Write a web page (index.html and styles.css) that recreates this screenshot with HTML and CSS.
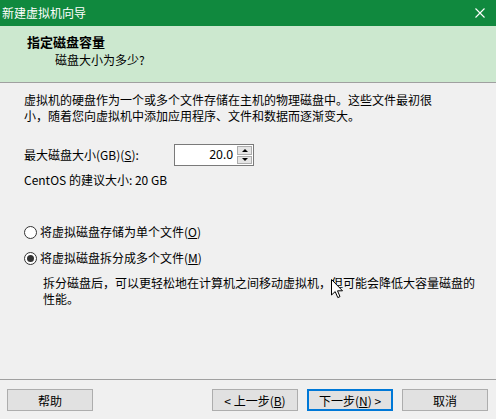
FILE: index.html
```html
<!DOCTYPE html>
<html>
  <head>
    <link rel="stylesheet" href="styles.css">
  </head>
  <body>
    <div class="window">
      <div class="titlebar">
        <span class="title">新建虚拟机向导</span>
        <svg class="close" width="10" height="10" viewBox="0 0 10 10">
          <path d="M0.5 0.5 L9.5 9.5 M9.5 0.5 L0.5 9.5" stroke="#fff" stroke-width="1.1" fill="none" />
        </svg>
      </div>

      <div class="header">
        <div class="header-title">指定磁盘容量</div>
        <div class="header-sub">磁盘大小为多少?</div>
      </div>

      <div class="content">
        <p class="intro">
          虚拟机的硬盘作为一个或多个文件存储在主机的物理磁盘中。这些文件最初很<br />
          小，随着您向虚拟机中添加应用程序、文件和数据而逐渐变大。
        </p>

        <div class="size-row">
          <label class="size-label">最大磁盘大小(GB)(<u>S</u>):</label>
          <div class="spin">
            <div class="spin-value">20.0</div>
            <div class="spin-buttons">
              <div class="spin-btn"><span class="arrow-up"></span></div>
              <div class="spin-btn"><span class="arrow-down"></span></div>
            </div>
          </div>
        </div>

        <div class="hint">CentOS 的建议大小: 20 GB</div>

        <div class="radio-group">
          <div class="radio-row">
            <span class="radio"></span>
            <span>将虚拟磁盘存储为单个文件(<u>O</u>)</span>
          </div>
          <div class="radio-row">
            <span class="radio checked"></span>
            <span>将虚拟磁盘拆分成多个文件(<u>M</u>)</span>
          </div>
          <p class="radio-desc">
            拆分磁盘后，可以更轻松地在计算机之间移动虚拟机，但可能会降低大容量磁盘的<br />
            性能。
          </p>
        </div>
      </div>

      <div class="footer">
        <button class="btn">帮助</button>
        <div class="nav-buttons">
          <button class="btn">&lt; 上一步(<u>B</u>)</button>
          <button class="btn default">下一步(<u>N</u>) &gt;</button>
          <button class="btn">取消</button>
        </div>
      </div>

      <!-- mouse pointer -->
      <svg class="cursor" width="13" height="20" viewBox="0 0 13 20">
        <path d="M0.5 0.5 L0.5 16 L4.2 12.6 L6.8 18.6 L9 17.6 L6.5 11.8 L11.5 11.8 Z" fill="#fff" stroke="#000" stroke-width="1" stroke-linejoin="miter" />
      </svg>
    </div>
  </body>
</html>
```

FILE: styles.css
```css
html,
body {
  margin: 0;
  padding: 0;
}
body {
  font-family: "Noto Sans CJK SC", "Noto Sans", sans-serif;
  font-size: 12px;
  line-height: 16px;
  color: #000;
  background: #f0f0f0;
}
u {
  text-decoration: underline;
  text-underline-offset: 1px;
}
.window {
  position: relative;
  width: 496px;
  height: 419px;
  display: flex;
  flex-direction: column;
  overflow: hidden;
}
.titlebar {
  height: 26px;
  background: #10893e;
  color: #fff;
  display: flex;
  align-items: center;
  justify-content: space-between;
  padding: 0 11px 0 2px;
  box-sizing: border-box;
}
.close {
  display: block;
}
.header {
  height: 57px;
  box-sizing: border-box;
  background: #cce8cf;
  border-bottom: 1px solid #a0a0a0;
  padding: 7px 0 0 27px;
}
.header-title {
  font-weight: bold;
  font-size: 13px;
  line-height: 17px;
}
.header-sub {
  padding-left: 28px;
  margin-top: 2px;
}
.content {
  flex: 1;
  padding: 0 0 0 24px;
}
.intro {
  margin: 9px 0 0 0;
}
.size-row {
  display: flex;
  align-items: center;
  margin-top: 20px;
  height: 22px;
}
.size-label {
  width: 150px;
}
.spin {
  display: flex;
  width: 80px;
  height: 22px;
  box-sizing: border-box;
  border: 1px solid #7a7a7a;
  background: #fff;
}
.spin-value {
  flex: 1;
  text-align: right;
  padding-right: 4px;
  line-height: 20px;
  font-family: "Noto Sans", sans-serif;
}
.spin-buttons {
  width: 16px;
  display: flex;
  flex-direction: column;
  gap: 1px;
  padding: 1px 1px 1px 0;
  box-sizing: border-box;
}
.spin-btn {
  flex: 1;
  background: #e5e5e5;
  border: 1px solid #adadad;
  display: flex;
  align-items: center;
  justify-content: center;
}
.arrow-up,
.arrow-down {
  width: 0;
  height: 0;
  border-left: 3px solid transparent;
  border-right: 3px solid transparent;
}
.arrow-up {
  border-bottom: 3px solid #000;
}
.arrow-down {
  border-top: 3px solid #000;
}
.hint {
  margin-top: 6px;
}
.radio-group {
  margin-top: 36px;
}
.radio-row {
  display: flex;
  align-items: center;
  gap: 3px;
  height: 16px;
  margin-bottom: 10px;
}
.radio {
  width: 13px;
  height: 13px;
  box-sizing: border-box;
  border: 1px solid #333;
  border-radius: 50%;
  background: #fff;
  display: flex;
  align-items: center;
  justify-content: center;
}
.radio.checked::after {
  content: "";
  width: 7px;
  height: 7px;
  border-radius: 50%;
  background: #333;
}
.radio-desc {
  margin: -1px 0 0 19px;
}
.footer {
  height: 40px;
  box-sizing: border-box;
  border-top: 1px solid #a0a0a0;
  display: flex;
  align-items: flex-start;
  padding: 9px 8px 0 7px;
}
.nav-buttons {
  margin-left: auto;
  display: flex;
  gap: 9px;
}
.btn {
  width: 86px;
  height: 22px;
  box-sizing: border-box;
  background: #e1e1e1;
  border: 1px solid #adadad;
  font-family: "Noto Sans CJK SC", "Noto Sans", sans-serif;
  font-size: 12px;
  color: #000;
  padding: 0;
}
.btn.default {
  border: 2px solid #0078d7;
}
.cursor {
  position: absolute;
  left: 331px;
  top: 279px;
}
```
